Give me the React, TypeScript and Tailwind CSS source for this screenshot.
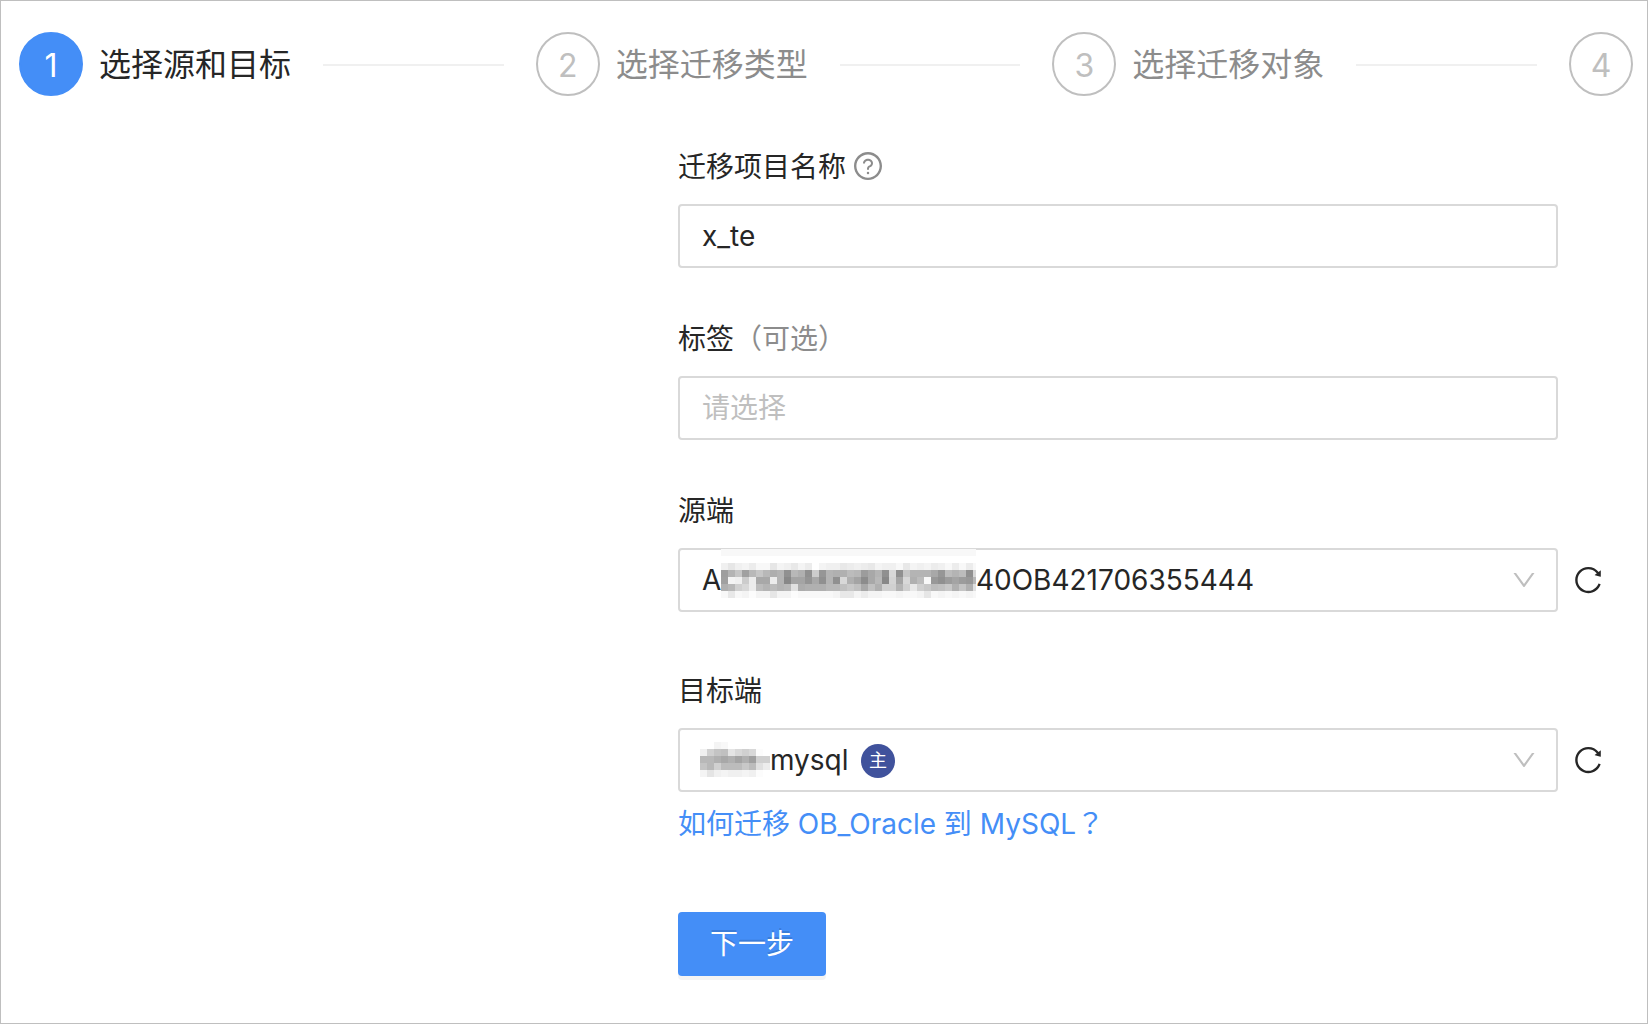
import { useState } from 'react';
import type { ReactNode } from 'react';
import { AiOutlineDown, AiOutlineQuestionCircle, AiOutlineReload } from 'react-icons/ai';

const steps = ['选择源和目标', '选择迁移类型', '选择迁移对象'];

// grey level of each mask block, two hex digits per block, one string per row
const sourceMask = [
  'f8f8f8f8f8f8f8f8f8f8f8f8f8f8f8f8f8f8f8f8f8f8f8f8f8f8f8f8f8f8f8f8f8f8f8f8f8',
  'ffffffffffffffffffffffffffffffffffffffffffffffffffffffffffffffffffffffffff',
  'f0e6f0f4ecf8f8e6f4f0e8f4ecfff4f0f0e8ecf0ece8f4f0f0f8e8f4f0f4ecf0f8ecf8ecf8',
  '9eb4c6a0b8c6b8aeb490b8b090cc96b4b0b0bcb89ca8b490d890c6b4b4b4a896bcb4bc90d8',
  'a0f4f0cceca8a8ecb488a4a494a890b490d8b0a48ca8b888d4a4d8b0bcf898909ca49c98b8',
  'b0b8d0d8ecbcb4bcb4b8e0acb0b0b0b8b8c0c8c0a8c0b0d0d0b4d0e8d0c8bcc0c8b0c4b0e0',
  'f8e8f8f4fcf4f4e6f4f4fcf8f8f8f8f8f4e8e8f4ecf4f4f8f8f4f8f8f4e6f8f4f8f4f8f4f8',
];

const targetMask = [
  'fffff4f8ffffffffffff',
  'f0d0c4c0e4d8d0d8fcff',
  'b8b8b0a8b0a4b0a0d0d0',
  'c4b8d0bcbcbcc8bce0ec',
  'f4e4f0f4f0f0f4f0fcff',
];

function Mask({ rows, width, className }: { rows: string[]; width: number; className: string }) {
  return (
    <svg
      width={width}
      height={rows.length * 7}
      shapeRendering="crispEdges"
      className={`pointer-events-none absolute ${className}`}
      aria-hidden="true"
    >
      {rows.map((row, y) =>
        (row.match(/../g) ?? []).map((c, x) => (
          <rect key={`${x}-${y}`} x={x * 7} y={y * 7} width={7} height={7} fill={`#${c}${c}${c}`} />
        ))
      )}
    </svg>
  );
}

function Step({ index, title, active }: { index: number; title?: string; active?: boolean }) {
  return (
    <li className={`flex items-center ${title ? 'min-w-0 flex-1' : 'shrink-0'}`} aria-current={active ? 'step' : undefined}>
      <span
        className={`flex h-16 w-16 shrink-0 items-center justify-center rounded-full border-2 pt-[4px] text-[32px] leading-none ${
          active ? 'border-[#448ef7] bg-[#448ef7] text-white' : 'border-[#bfbfbf] text-[#bfbfbf]'
        }`}
      >
        {index}
      </span>
      {title && (
        <>
          <span className={`ml-4 shrink-0 pt-[2px] text-[32px] leading-[44px] ${active ? 'text-[#262626]' : 'text-[#8c8c8c]'}`}>{title}</span>
          <span className="mx-8 mt-[2px] h-[2px] flex-1 bg-[#f0f0f0]" />
        </>
      )}
    </li>
  );
}

interface FieldProps {
  id: string;
  label: string;
  extra?: ReactNode;
  action?: ReactNode;
  children: ReactNode;
}

function Field({ id, label, extra, action, children }: FieldProps) {
  return (
    <div>
      <div className="mb-4 flex h-11 items-center">
        <label htmlFor={id} className="pt-[2px]">{label}</label>
        {extra}
      </div>
      <div className="flex items-center">
        <div className="relative flex-1">{children}</div>
        <div className="flex w-[89px] pl-[14px]">{action}</div>
      </div>
    </div>
  );
}

function ReloadButton({ label }: { label: string }) {
  return (
    <button type="button" aria-label={label}>
      <AiOutlineReload size={32} />
    </button>
  );
}

const control = 'block h-16 w-full appearance-none rounded-[4px] border-2 border-[#d9d9d9] bg-white outline-none focus:border-[#448ef7]';
const arrow = 'pointer-events-none absolute top-[18px] right-5 text-[#bfbfbf]';

export default function App() {
  const [name, setName] = useState('x_te');

  return (
    <div
      lang="zh-CN"
      className="min-h-screen border border-[#bfbfbf] bg-white font-['Inter','Noto_Sans_CJK_SC',sans-serif] text-[28px] leading-[44px] text-[#262626]"
    >
      <ol className="flex pt-[31px] pr-[14px] pl-[18px]">
        {steps.map((title, i) => (
          <Step key={title} index={i + 1} title={title} active={i === 0} />
        ))}
        <Step index={4} />
      </ol>

      <div className="mt-12 grid grid-cols-[10fr_13fr_89px]">
        <form className="col-span-2 col-start-2" onSubmit={(e) => e.preventDefault()}>
          <div className="flex flex-col gap-12">
            <Field
              id="name"
              label="迁移项目名称"
              extra={<AiOutlineQuestionCircle size={32} className="ml-1.5 text-[#8c8c8c]" />}
            >
              <input id="name" value={name} onChange={(e) => setName(e.target.value)} className={`${control} px-[22px]`} />
            </Field>
            <Field id="tag" label="标签" extra={<span className="pt-[2px] text-[#8c8c8c]">（可选）</span>}>
              <input id="tag" placeholder="请选择" className={`${control} px-[22px] placeholder:text-[#bfbfbf]`} />
            </Field>
            <Field id="source" label="源端" action={<ReloadButton label="刷新源端" />}>
              <select id="source" className={`${control} pr-16 pl-[296px]`}>
                <option>40OB421706355444</option>
              </select>
              <span className="pointer-events-none absolute inset-y-0 left-6 flex items-center">A</span>
              <Mask rows={sourceMask} width={255} className="top-px left-[43px]" />
              <AiOutlineDown size={28} className={arrow} />
            </Field>
          </div>

          <div className="mt-14">
            <Field id="target" label="目标端" action={<ReloadButton label="刷新目标端" />}>
              <select id="target" className={`${control} pr-16 pl-[90px]`}>
                <option>mysql</option>
              </select>
              <Mask rows={targetMask} width={70} className="top-[14px] left-[22px]" />
              <span className="pointer-events-none absolute top-4 left-[183px] flex h-[34px] w-[34px] items-center justify-center rounded-full bg-[#40529c] text-[18px] leading-none text-white">
                主
              </span>
              <AiOutlineDown size={28} className={arrow} />
            </Field>
          </div>

          <div className="mt-2 flex h-11">
            <a href="#guide" className="text-[#448ef7]">
              如何迁移 OB_Oracle 到 MySQL
              <span lang="zh-TW" className="font-['Noto_Sans_CJK_TC',sans-serif]">？</span>
            </a>
          </div>
          <div className="mt-[68px]">
            <button type="submit" className="h-16 rounded-[4px] bg-[#448ef7] px-8 text-white shadow-[0_4px_0_rgba(0,0,0,0.045)] [text-shadow:0_-2px_0_rgba(0,0,0,0.12)]">
              下一步
            </button>
          </div>
        </form>
      </div>
    </div>
  );
}
